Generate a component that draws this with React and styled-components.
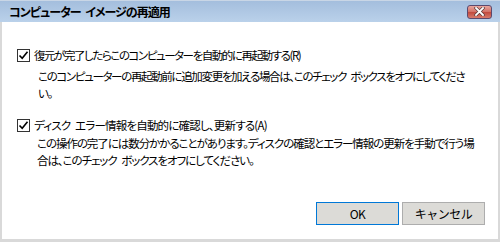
import React from "react";
import styled, { createGlobalStyle } from "styled-components";

const Global = createGlobalStyle`
  html, body { margin: 0; padding: 0; background: #fff; }
  body { width: 500px; height: 242px; overflow: hidden; }
  #root { width: 500px; height: 242px; }
`;

const Window = styled.div`
  width: 500px;
  height: 242px;
  box-sizing: border-box;
  display: flex;
  flex-direction: column;
  font-family: "Noto Sans CJK JP", "Noto Sans", sans-serif;
  font-feature-settings: "palt";
  font-size: 11.5px;
  word-spacing: 3px;
  color: #000;
  border-top: 1px solid #c9d6e6;
`;

const TitleBar = styled.div`
  height: 21px;
  display: flex;
  align-items: center;
  justify-content: space-between;
  padding: 0 8px 0 9px;
  background: linear-gradient(#a4bedd, #bad1ea);
  box-sizing: border-box;
`;

const Title = styled.div`
  font-weight: 700;
  font-size: 12px;
  letter-spacing: -1px;
  color: #000;
`;

const CloseButton = styled.div`
  width: 25px;
  height: 14px;
  box-sizing: border-box;
  border: 1px solid #5c4a6e;
  border-radius: 3px;
  background: linear-gradient(#e9a59d, #d26f64 50%, #c1483c 51%, #d77a6c);
  display: flex;
  align-items: center;
  justify-content: center;
`;

const Body = styled.div`
  flex: 1;
  display: flex;
  flex-direction: column;
  background: #fff;
  border-left: 2px solid #d9d9d9;
  border-right: 2px solid #d9d9d9;
  border-bottom: 3px solid #d9d9d9;
  padding: 25px 0 0 15px;
`;

const Option = styled.div`
  display: flex;
  flex-direction: column;
  margin-bottom: ${(p) => p.$gap || 0}px;
`;

const CheckRow = styled.label`
  display: flex;
  align-items: center;
  gap: 4px;
  height: 17px;
  line-height: 17px;
  white-space: pre;
  letter-spacing: ${(p) => p.$ls}px;
`;

const Box = styled.span`
  width: 13px;
  height: 13px;
  flex: none;
  box-sizing: border-box;
  border: 1px solid #333;
  background: #fff;
  display: flex;
  align-items: center;
  justify-content: center;
`;

const Desc = styled.div`
  margin-top: ${(p) => p.$top}px;
  padding-left: ${(p) => p.$indent}px;
  line-height: 17px;
  white-space: nowrap;
  letter-spacing: ${(p) => p.$ls}px;
`;

const Footer = styled.div`
  margin-top: auto;
  display: flex;
  justify-content: flex-end;
  gap: 3px;
  padding: 0 13px 14px 0;
`;

const Button = styled.button`
  width: 83px;
  height: 23px;
  box-sizing: border-box;
  background: #dcdbd7;
  border: 1px solid ${(p) => (p.$default ? "#0078d7" : "#adadad")};
  font-family: inherit;
  font-size: 12px;
  letter-spacing: -0.5px;
  color: #000;
  padding: 0;
`;

const Check = () => (
  <svg width="11" height="11" viewBox="0 0 11 11">
    <path d="M1.5 5.5 L4.2 8.3 L9.5 1.8" fill="none" stroke="#000" strokeWidth="1.6" />
  </svg>
);

const CloseX = () => (
  <svg width="11" height="9" viewBox="0 0 11 9">
    <path d="M2 1 L9 8 M9 1 L2 8" stroke="#5a3a3a" strokeWidth="3.2" strokeLinecap="square" />
    <path d="M2 1 L9 8 M9 1 L2 8" stroke="#fff" strokeWidth="1.8" strokeLinecap="square" />
  </svg>
);

export default function App() {
  return (
    <>
      <Global />
      <Window>
        <TitleBar>
          <Title>コンピューター イメージの再適用</Title>
          <CloseButton>
            <CloseX />
          </CloseButton>
        </TitleBar>
        <Body>
          <Option $gap={15}>
            <CheckRow $ls={-1.45}>
              <Box>
                <Check />
              </Box>
              <span>復元が完了したらこのコンピューターを自動的に再起動する(R)</span>
            </CheckRow>
            <Desc $top={4} $indent={21} $ls={-1.35}>
              このコンピューターの再起動前に追加変更を加える場合は、このチェック ボックスをオフにしてくださ
              <br />
              い。
            </Desc>
          </Option>
          <Option>
            <CheckRow $ls={-0.8}>
              <Box>
                <Check />
              </Box>
              <span>ディスク エラー情報を自動的に確認し、更新する(A)</span>
            </CheckRow>
            <Desc $top={1} $indent={20} $ls={-1.05}>
              この操作の完了には数分かかることがあります。ディスクの確認とエラー情報の更新を手動で行う場
              <br />
              合は、このチェック ボックスをオフにしてください。
            </Desc>
          </Option>
          <Footer>
            <Button $default>OK</Button>
            <Button>キャンセル</Button>
          </Footer>
        </Body>
      </Window>
    </>
  );
}
